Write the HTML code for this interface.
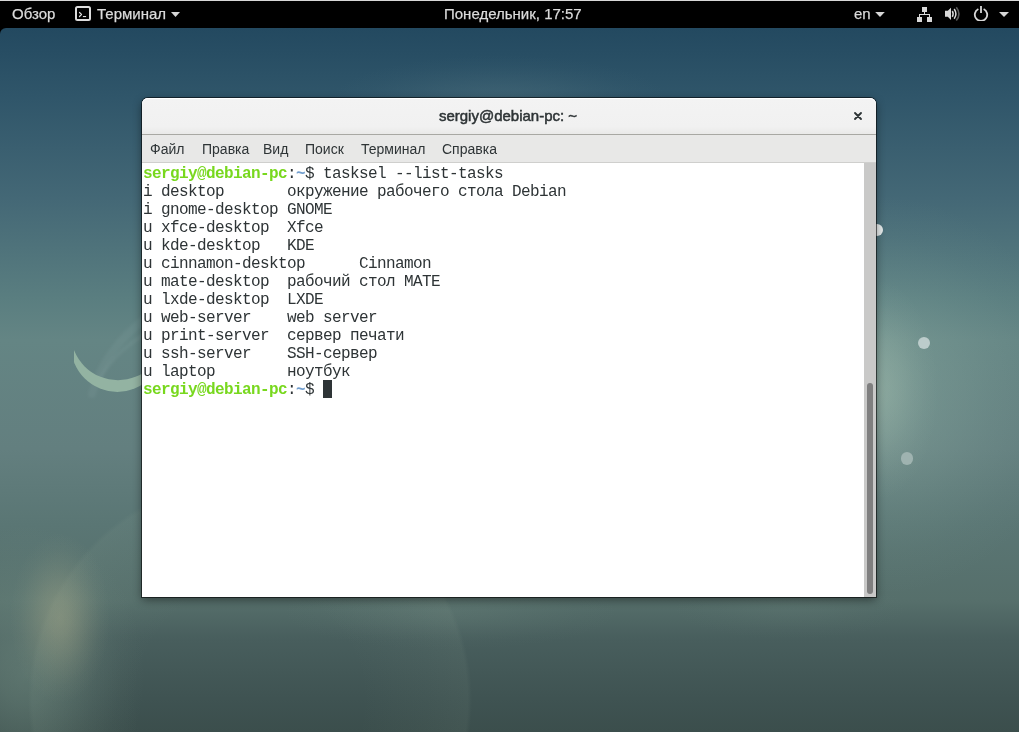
<!DOCTYPE html>
<html><head><meta charset="utf-8">
<style>
*{margin:0;padding:0;box-sizing:border-box}
html,body{width:1019px;height:732px;overflow:hidden;background:#000}
body{position:relative;will-change:transform;font-family:"Liberation Sans",sans-serif}
#topline{position:absolute;left:0;top:0;width:1019px;height:1px;background:#d8d8d8}
#bar{position:absolute;left:0;top:1px;width:1019px;height:27px;background:#000;color:#dcdcdc;font-size:15px}
.bt{position:absolute;top:4px;white-space:nowrap;-webkit-text-stroke:0.25px #d6d6d6}
#desk{position:absolute;left:0;top:28px;width:1019px;height:704px;border-radius:6px 0 0 0;overflow:hidden;
 background:
 radial-gradient(ellipse 60px 110px at 878px 362px,rgba(175,200,182,0.350) 0%,rgba(175,200,182,0.297) 20%,rgba(175,200,182,0.210) 40%,rgba(175,200,182,0.115) 60%,rgba(175,200,182,0.042) 80%,rgba(175,200,182,0.000) 100%),
 radial-gradient(ellipse 190px 200px at 880px 367px,rgba(150,182,170,0.360) 0%,rgba(150,182,170,0.306) 20%,rgba(150,182,170,0.216) 40%,rgba(150,182,170,0.119) 60%,rgba(150,182,170,0.043) 80%,rgba(150,182,170,0.000) 100%),
 radial-gradient(ellipse 170px 45px at 500px 72px,rgba(110,140,145,0.220) 0%,rgba(110,140,145,0.187) 20%,rgba(110,140,145,0.132) 40%,rgba(110,140,145,0.073) 60%,rgba(110,140,145,0.026) 80%,rgba(110,140,145,0.000) 100%),
 radial-gradient(ellipse 170px 38px at 450px 584px,rgba(125,150,140,0.160) 0%,rgba(125,150,140,0.136) 20%,rgba(125,150,140,0.096) 40%,rgba(125,150,140,0.053) 60%,rgba(125,150,140,0.019) 80%,rgba(125,150,140,0.000) 100%),
 radial-gradient(ellipse 120px 32px at 790px 580px,rgba(125,150,140,0.100) 0%,rgba(125,150,140,0.085) 20%,rgba(125,150,140,0.060) 40%,rgba(125,150,140,0.033) 60%,rgba(125,150,140,0.012) 80%,rgba(125,150,140,0.000) 100%),
 radial-gradient(ellipse 50px 85px at 60px 590px,rgba(180,178,142,0.400) 0%,rgba(180,178,142,0.340) 20%,rgba(180,178,142,0.240) 40%,rgba(180,178,142,0.132) 60%,rgba(180,178,142,0.048) 80%,rgba(180,178,142,0.000) 100%),
 radial-gradient(ellipse 120px 150px at 25px 647px,rgba(138,168,152,0.360) 0%,rgba(138,168,152,0.306) 20%,rgba(138,168,152,0.216) 40%,rgba(138,168,152,0.119) 60%,rgba(138,168,152,0.043) 80%,rgba(138,168,152,0.000) 100%),
 radial-gradient(circle 222px at 250px 672px,rgba(165,185,165,0) 0%,rgba(165,185,165,0) 50%,rgba(165,185,165,0.039) 80%,rgba(165,185,165,0.070) 98%,rgba(165,185,165,0) 100%),
 linear-gradient(180deg,#234960 0%,#30566a 10.1%,#446876 24.3%,#5a7e80 38.5%,#648584 44.3%,#637f7f 59.8%,#5a7674 70.6%,#566f6b 81.3%,#485e5d 86.8%,#3f5352 95.3%,#3b4e4c 100%);}
.dot{position:absolute;width:12.5px;height:12.5px;border-radius:50%}
#win{position:absolute;left:142px;top:98px;width:734px;height:499px;background:#fff;border-radius:6px 6px 0 0;
 box-shadow:0 0 0 1px rgba(0,0,0,.55),0 3px 10px rgba(0,0,0,.45)}
#title{position:absolute;left:0;top:0;width:734px;height:37px;background:linear-gradient(#f3f3f3,#f1f1f1 80%,#e9e9e8);border-radius:6px 6px 0 0;border-bottom:1px solid #a8a8a3;box-shadow:inset 0 1px 0 #fff}
#title .t{position:absolute;left:-1px;width:734px;text-align:center;top:9px;font-size:15px;color:#2e3436;-webkit-text-stroke:0.5px #2e3436}
#menu{position:absolute;left:0;top:37px;width:734px;height:28px;background:#e8e8e7;border-bottom:1px solid #cfcfcd}
#menu span{position:absolute;top:6px;font-size:14px;color:#2e3436}
#term{position:absolute;left:0;top:65px;width:722px;height:434px;background:#fff;font-family:"Liberation Mono",monospace;font-size:16px;letter-spacing:-0.6px;line-height:18px;color:#2e3436;white-space:pre;padding:2px 0 0 1px}
#trough{position:absolute;left:722px;top:65px;width:12px;height:434px;background:#c9c9c8}
#slider{position:absolute;left:3px;top:220px;width:6px;height:211px;background:#7f7f7f;border-radius:3px}
.g{color:#78d81e;font-weight:bold}
.b{color:#729fcf;font-weight:bold}
#cursor{display:inline-block;width:9px;height:18px;background:#2e3436;vertical-align:top;position:relative;top:-1px}
</style></head><body>
<div id="topline"></div>
<div id="bar">
 <span class="bt" style="left:12px">Обзор</span>
 <svg style="position:absolute;left:75px;top:5px" width="16" height="15" viewBox="0 0 16 15"><rect x="1" y="1" width="14" height="13" rx="1.5" fill="none" stroke="#dddddd" stroke-width="2"/><path d="M4.5 6.5 L6.5 8.5 L4.5 10.5" fill="none" stroke="#dddddd" stroke-width="1.2" stroke-linecap="round" stroke-linejoin="round"/><rect x="7.9" y="10" width="3.2" height="1.1" fill="#dddddd"/></svg>
 <span class="bt" style="left:97px">Терминал</span>
 <svg style="position:absolute;left:171px;top:11px" width="9" height="5" viewBox="0 0 9 5"><path d="M0 0 H9 L4.5 5Z" fill="#d6d6d6"/></svg>
 <span class="bt" style="left:444px">Понедельник, 17:57</span>
 <span class="bt" style="left:854px">en</span>
 <svg style="position:absolute;left:875px;top:11px" width="10" height="5" viewBox="0 0 10 5"><path d="M0.2 0 H9.8 L5 5Z" fill="#d6d6d6"/></svg>
 <svg style="position:absolute;left:917px;top:6px" width="15" height="15" viewBox="0 0 15 15" fill="#d8d8d8"><rect x="5" y="0" width="5" height="5"/><rect x="7" y="5" width="1" height="2"/><rect x="2" y="7" width="11" height="1"/><rect x="2" y="7" width="1" height="3"/><rect x="12" y="7" width="1" height="3"/><rect x="0" y="10" width="5" height="5"/><rect x="10" y="10" width="5" height="5"/></svg>
 <svg style="position:absolute;left:945px;top:3px" width="17" height="18" viewBox="0 0 17 18"><path d="M0 6.8 H2.8 L6 3.8 V16 L2.8 12.8 H0 Z" fill="#d8d8d8"/><path d="M7.3 7 Q9 9.9 7.3 12.8" fill="none" stroke="#d8d8d8" stroke-width="1.5"/><path d="M9.2 5 Q12.6 9.9 9.2 14.8" fill="none" stroke="#d8d8d8" stroke-width="1.5"/><path d="M11.3 3.2 Q16.6 9.9 11.3 16.6" fill="none" stroke="#5a5a5a" stroke-width="1.6"/></svg>
 <svg style="position:absolute;left:973px;top:3px" width="16" height="17" viewBox="0 0 16 17"><path d="M5.38 5.0 A6.2 6.2 0 1 0 10.62 5.0" fill="none" stroke="#d8d8d8" stroke-width="1.8"/><path d="M8 2 V9" stroke="#d8d8d8" stroke-width="1.8"/></svg>
 <svg style="position:absolute;left:999px;top:11px" width="10" height="5" viewBox="0 0 10 5"><path d="M0 0 H10 L5 5Z" fill="#d6d6d6"/></svg>
</div>
<div id="desk">
 <div class="dot" style="left:870.5px;top:195.5px;background:#e6ebeb"></div>
 <div class="dot" style="left:917.5px;top:308.5px;background:#bccccb"></div>
 <div class="dot" style="left:900.8px;top:424.3px;background:#9fb3b0"></div>
 <svg style="position:absolute;left:0;top:0" width="200" height="450" viewBox="0 28 200 450">
  <defs><mask id="cm"><rect x="74" y="0" width="200" height="500" fill="#fff"/><circle cx="118" cy="333" r="47.2" fill="#000"/></mask></defs>
  <filter id="sb"><feGaussianBlur stdDeviation="1.6"/></filter><g filter="url(#sb)"><path d="M92 394 Q104 350 146 318" fill="none" stroke="rgba(220,240,230,.05)" stroke-width="8" stroke-linecap="round"/><path d="M99 380 Q116 350 146 334" fill="none" stroke="rgba(220,240,230,.06)" stroke-width="3.5" stroke-linecap="round"/></g>
  <circle cx="117.3" cy="345.5" r="46.4" fill="#93b3a2" mask="url(#cm)"/>
 </svg>
</div>
<div id="win">
 <div id="title"><div class="t">sergiy@debian-pc: ~</div>
  <svg style="position:absolute;left:711px;top:13px" width="10" height="10" viewBox="0 0 10 10"><path d="M2 2 L8 8 M8 2 L2 8" stroke="#2e3436" stroke-width="1.9" stroke-linecap="round"/></svg>
 </div>
 <div id="menu"><span style="left:8px">Файл</span><span style="left:60px">Правка</span><span style="left:121px">Вид</span><span style="left:163px">Поиск</span><span style="left:219px">Терминал</span><span style="left:300px">Справка</span></div>
 <div id="term"><span class="g">sergiy@debian-pc</span>:<span class="b">~</span>$ tasksel --list-tasks
i desktop       окружение рабочего стола Debian
i gnome-desktop GNOME
u xfce-desktop  Xfce
u kde-desktop   KDE
u cinnamon-desktop      Cinnamon
u mate-desktop  рабочий стол MATE
u lxde-desktop  LXDE
u web-server    web server
u print-server  сервер печати
u ssh-server    SSH-сервер
u laptop        ноутбук
<span class="g">sergiy@debian-pc</span>:<span class="b">~</span>$ <span id="cursor"></span></div>
 <div id="trough"><div id="slider"></div></div>
</div>
</body></html>
